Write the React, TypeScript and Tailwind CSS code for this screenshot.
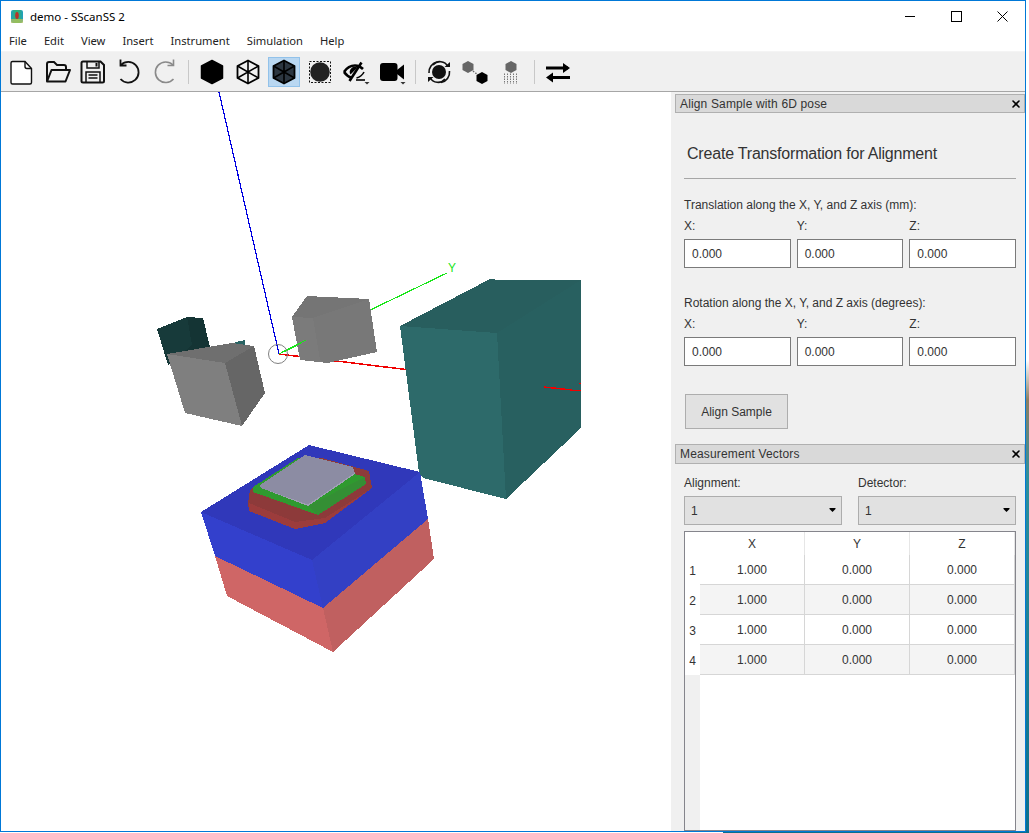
import React from "react";
import { X } from "lucide-react";

const menus = ["File", "Edit", "View", "Insert", "Instrument", "Simulation", "Help"];
const rows = [1, 2, 3, 4];
const hex = "15,3.5 25.5,9 25.5,21 15,26.5 4.5,21 4.5,9";

const Icon: React.FC<{ children: React.ReactNode; active?: boolean }> = ({ children, active }) => (
  <div className="w-9 h-[30px] flex items-center justify-center shrink-0">
    <div
      className={`w-8 h-[30px] flex items-center justify-center border ${
        active ? "bg-[#b9d7f1] border-[#92c2ea]" : "border-transparent"
      }`}
    >
      <svg width="30" height="30" viewBox="0 0 30 30" fill="none">
        {children}
      </svg>
    </div>
  </div>
);

const Sep = () => <div className="w-px h-6 bg-[#c8c8c8] mx-[5px] shrink-0" />;

const Spokes = ({ color = "#000" }: { color?: string }) => (
  <path d="M15 3.5V26.5M4.5 9 25.5 21M25.5 9 4.5 21" stroke={color} strokeWidth="1.6" />
);

const WinButton: React.FC<{ children: React.ReactNode }> = ({ children }) => (
  <div className="w-[46px] flex justify-center">
    <svg width="11" height="11" viewBox="0 0 11 11" fill="none" stroke="#000" strokeWidth="1">
      {children}
    </svg>
  </div>
);

const DockTitle: React.FC<{ title: string; className: string }> = ({ title, className }) => (
  <div className={`flex items-center justify-between bg-[#d9d9d9] border border-[#b0b0b0] pl-1 pr-[2px] text-[12px] text-[#333] tracking-[0.15px] ${className}`}>
    <span>{title}</span>
    <X size={12} strokeWidth={3.2} className="text-black" />
  </div>
);

const Input = () => (
  <div className="h-[29px] bg-white border border-[#7a7a7a] flex items-center pl-[7px] text-[12px] text-[#333]">0.000</div>
);

const Vectors = () => (
  <div className="grid grid-cols-3 gap-[6px] mt-[6px]">
    <Input />
    <Input />
    <Input />
  </div>
);

const AxisLabels = () => (
  <div className="grid grid-cols-3 gap-[6px] mt-[7px] h-[14px] leading-[14px] text-[12px] text-[#333]">
    <span>X:</span>
    <span>Y:</span>
    <span>Z:</span>
  </div>
);

const Select = () => (
  <div className="h-[29px] bg-[#e1e1e1] border border-[#adadad] flex items-center justify-between pl-[6px] pr-[4px] text-[12px] text-[#333]">
    <span>1</span>
    <svg width="9" height="5" viewBox="0 0 9 5">
      <path d="M1.5 0h6v1l-3 3-3-3z" fill="#000" />
    </svg>
  </div>
);

// viewport drawn in page coordinates
const Scene = () => (
  <svg className="w-full h-full" viewBox="1 92 670 739" shapeRendering="crispEdges">
    <polygon points="157,329 187,317 203,318 210,347 168,365" fill="#143434" />
    <polygon points="157,329 187,317 192,345 168,365" fill="#173a3a" />
    <polygon points="235,342 245,340 245,346 238,346" fill="#2a6464" />

    <line x1="219" y1="92" x2="279" y2="354" stroke="#0000e0" strokeWidth="1.2" />
    <line x1="279" y1="354" x2="447" y2="273" stroke="#19e619" strokeWidth="1.2" />
    <line x1="279" y1="354" x2="406" y2="369.5" stroke="#f00000" strokeWidth="1.5" />

    <polygon points="292,317 307,296 369,299 313,318" fill="#757575" />
    <polygon points="292,317 313,318 320,360 327,363 300,360" fill="#7b7b7b" />
    <polygon points="313,318 369,299 377,352 332,362 327,363 320,360" fill="#787878" />
    <line x1="279" y1="354" x2="306" y2="340" stroke="#19e619" strokeWidth="1.2" />

    <polygon points="167,354 232,343 254,346 225,363" fill="#6f6f6f" />
    <polygon points="167,354 225,363 242,426 185,413" fill="#7f7f7f" />
    <polygon points="225,363 254,346 265,393 242,426" fill="#666666" />

    <circle cx="278" cy="354" r="9.5" fill="none" stroke="#808080" strokeWidth="1" shapeRendering="auto" />

    <polygon points="400,326 490,279 500,280 581,280 497,333" fill="#285e5e" />
    <polygon points="400,326 497,333 506,499 423,478 419,473" fill="#2d6a6a" />
    <polygon points="497,333 581,280 581,428 506,499" fill="#286060" />
    <line x1="544" y1="387" x2="572" y2="390" stroke="#f00000" strokeWidth="1.5" />
    <line x1="572" y1="390" x2="581" y2="390" stroke="#f00000" strokeWidth="1" />
    <line x1="579" y1="383" x2="581" y2="383" stroke="#f00000" strokeWidth="1" />

    <polygon points="215,556 323,608 333,652 227,596" fill="#cf6666" />
    <polygon points="323,608 428,519 434,559 333,652" fill="#c06060" />
    <polygon points="201,512 309,445 420,472 312,560" fill="#3038ba" />
    <polygon points="201,512 312,560 323,608 215,556" fill="#3340cc" />
    <polygon points="312,560 420,472 428,519 323,608" fill="#3340c4" />

    <polygon points="250,490 298,458 322,458 369,471 372,488 325,523 295,529 249,511 248,503" fill="#8d3a3a" />
    <polygon points="249,503 295,522 325,518 372,488 325,523 295,529 249,511" fill="#9c3c3c" />
    <polygon points="253,487 298,458 365,477 366,484 318,515 253,492" fill="#2f9a2f" />
    <polygon points="318,515 366,484 365,477 308,506" fill="#348f34" />
    <polygon points="260,485 305,455 353,467 355,474 308,506 261,488" fill="#8c8ca3" />
    <polygon points="261,488 308,504.5 355,472.5 355,474 308,506" fill="#a0a0b5" />

    <text x="448" y="272" fill="#19e619" fontSize="12" fontFamily="Liberation Sans, sans-serif" shapeRendering="auto">
      Y
    </text>
  </svg>
);

export default function App() {
  return (
    <div className="w-[1029px] h-[833px] flex overflow-hidden font-['Liberation_Sans',sans-serif] bg-[linear-gradient(90deg,#ffffff_0,#ffffff_723px,#0c6f8c_723px)]">
      <div className="w-[1026px] h-[832px] border border-[#0078d7] flex flex-col bg-white shrink-0">
        {/* title bar */}
        <div className="h-[31px] flex items-center shrink-0">
          <svg className="ml-[10px]" width="12" height="13" viewBox="0 0 12 13">
            <defs>
              <linearGradient id="logo" x1="0" x2="1" y1="0" y2="0">
                <stop offset="0" stopColor="#1f9fc0" />
                <stop offset="0.35" stopColor="#2fae7a" />
                <stop offset="0.65" stopColor="#2fae7a" />
                <stop offset="1" stopColor="#1f9fc0" />
              </linearGradient>
            </defs>
            <rect width="12" height="13" rx="2" fill="url(#logo)" />
            <rect x="0" y="9" width="12" height="4" fill="#d8c84a" opacity="0.6" />
            <ellipse cx="6" cy="5.5" rx="1.8" ry="3.5" fill="#b8322a" />
          </svg>
          <span className="ml-[7px] text-[11.5px] text-black font-['Noto_Sans',sans-serif]">demo - SScanSS 2</span>
          <div className="ml-auto flex">
            <WinButton>
              <path d="M0 5.5H10" shapeRendering="crispEdges" />
            </WinButton>
            <WinButton>
              <rect x="0.5" y="0.5" width="10" height="10" shapeRendering="crispEdges" />
            </WinButton>
            <WinButton>
              <path d="M0.5 0.5 10.5 10.5M10.5 0.5 0.5 10.5" />
            </WinButton>
          </div>
        </div>

        {/* menu bar */}
        <div className="h-5 flex items-center gap-[17px] pl-2 text-[11.2px] text-[#222] font-['Noto_Sans',sans-serif] border-b border-[#f4f4f4] shrink-0">
          {menus.map((m) => (
            <span key={m}>{m}</span>
          ))}
        </div>

        {/* toolbar */}
        <div className="h-10 flex items-center pl-[2px] bg-[#f0f0f0] border-b border-[#a6a6a6] shrink-0">
          <Icon>
            <path d="M6.5 4.5H19L25.5 11.5V25.5A1.5 1.5 0 0 1 24 27H6.5A1.5 1.5 0 0 1 5 25.5V6A1.5 1.5 0 0 1 6.5 4.5Z" fill="#fff" stroke="#111" strokeWidth="1.4" />
            <path d="M19 4.5V9.5A2 2 0 0 0 21 11.5H25.5" stroke="#111" strokeWidth="1.4" />
          </Icon>
          <Icon>
            <path d="M5 24V7A2 2 0 0 1 7 5H12L15 8H22A2 2 0 0 1 24 10V13" stroke="#111" strokeWidth="2" />
            <path d="M5 24.5 9.5 13H28L23.5 24.5Z" stroke="#111" strokeWidth="2" strokeLinejoin="round" />
          </Icon>
          <Icon>
            <path d="M5 4.5H22.5L26 8V24A1.5 1.5 0 0 1 24.5 25.5H5A1.5 1.5 0 0 1 3.5 24V6A1.5 1.5 0 0 1 5 4.5Z" stroke="#111" strokeWidth="2" />
            <path d="M9 5V11H21V5" stroke="#111" strokeWidth="1.5" />
            <rect x="17.5" y="6" width="2" height="3.5" fill="#111" />
            <path d="M8 25V15H22V25" stroke="#111" strokeWidth="1.5" />
            <path d="M10.5 18H19.5M10.5 21H19.5" stroke="#111" strokeWidth="1.3" />
          </Icon>
          <Icon>
            <path d="M7 8A10.3 10.3 0 1 1 6.5 22" stroke="#111" strokeWidth="1.8" />
            <path d="M6.5 2.5V8.5H12.5" stroke="#111" strokeWidth="1.8" />
          </Icon>
          <Icon>
            <path d="M23 8A10.3 10.3 0 1 0 23.5 22" stroke="#8a8a8a" strokeWidth="1.6" />
            <path d="M23.5 2.5V8.5H17.5" stroke="#8a8a8a" strokeWidth="1.6" />
          </Icon>
          <Sep />
          <Icon>
            <polygon points={hex} fill="#000" stroke="#000" strokeWidth="1.5" strokeLinejoin="round" />
          </Icon>
          <Icon>
            <polygon points={hex} stroke="#000" strokeWidth="1.8" strokeLinejoin="round" />
            <Spokes />
          </Icon>
          <Icon active>
            <polygon points={hex} fill="#2c3640" stroke="#000" strokeWidth="1.8" strokeLinejoin="round" />
            <Spokes />
          </Icon>
          <Icon>
            <rect x="4.5" y="4.5" width="21" height="21" stroke="#111" strokeWidth="1" strokeDasharray="2 1.5" />
            <circle cx="15" cy="15" r="9.8" fill="#222" />
          </Icon>
          <Icon>
            <path d="M3 15C6 10.5 10 8.5 14 8.5C17 8.5 19.5 9.5 22 12" stroke="#000" strokeWidth="2.6" />
            <path d="M3 15C5.5 18.5 8 20 11 21" stroke="#000" strokeWidth="2.6" />
            <path d="M15 10A5 5 0 0 0 9.5 17.5L16.5 10.5Z" fill="#000" />
            <path d="M8.5 24 20.5 5.5" stroke="#000" strokeWidth="2.6" />
            <path d="M23 15C21.5 18 19 20 15.5 21" stroke="#000" strokeWidth="1.6" />
            <path d="M15 23H24" stroke="#000" strokeWidth="1.6" />
            <path d="M23.5 25H28.5L26 27.5Z" fill="#333" />
          </Icon>
          <Icon>
            <rect x="3" y="6" width="17.5" height="18" rx="3" fill="#000" />
            <path d="M20 13 27 7.5V22.5L20 17Z" fill="#000" />
            <path d="M23.5 25H28.5L26 27.5Z" fill="#333" />
          </Icon>
          <Sep />
          <Icon>
            <circle cx="15" cy="15" r="7" fill="#111" />
            <path d="M5 16A10.5 10.5 0 0 1 13 5M25.5 14A10.5 10.5 0 0 1 17 25.5" stroke="#111" strokeWidth="1.6" />
            <path d="M9 8A9 9 0 0 1 24 9.5M21 22A9 9 0 0 1 6 20.5" stroke="#111" strokeWidth="1.6" />
            <path d="M20.5 10H26V5ZM9.5 20H4V25Z" fill="#111" />
          </Icon>
          <Icon>
            <polygon points="8,4 13.5,7 13.5,13 8,16 2.5,13 2.5,7" fill="#666" />
            <path d="M13 14 18 18" stroke="#666" strokeWidth="1.4" strokeDasharray="1.5 1.5" />
            <polygon points="22,15 27.5,18 27.5,24 22,27 16.5,24 16.5,18" fill="#000" />
          </Icon>
          <Icon>
            <polygon points="15,4 20.5,7 20.5,13 15,16 9.5,13 9.5,7" fill="#666" />
            <path d="M8.5 16.5V27M11.5 16.5V27M14.5 16.5V27M17.5 16.5V27M20.5 16.5V27" stroke="#777" strokeWidth="1" strokeDasharray="1.5 1" />
          </Icon>
          <Sep />
          <Icon>
            <path d="M3 11H25M5 20.5H27" stroke="#000" strokeWidth="2.8" />
            <path d="M20 6 27 11 20 16ZM10 15.5 3 20.5 10 25.5Z" fill="#000" />
          </Icon>
        </div>

        {/* main */}
        <div className="flex-1 flex min-h-0">
          <div className="w-[670px] shrink-0 bg-white">
            <Scene />
          </div>

          <div className="flex-1 flex flex-col min-h-0 bg-[#f0f0f0] pl-1 pt-[2px]">
            <DockTitle title="Align Sample with 6D pose" className="h-[19px]" />
            <div className="pl-[9px] pr-[9px]">
              <div className="mt-[31px] pl-[3px] h-5 leading-5 text-[16px] text-[#333] tracking-[-0.2px]">Create Transformation for Alignment</div>
              <div className="mt-[14px] h-px bg-[#a6a6a6]" />
              <div className="mt-[19px] h-[14px] leading-[14px] text-[12px] text-[#333]">Translation along the X, Y, and Z axis (mm):</div>
              <AxisLabels />
              <Vectors />
              <div className="mt-7 h-[14px] leading-[14px] text-[12px] text-[#333]">Rotation along the X, Y, and Z axis (degrees):</div>
              <AxisLabels />
              <Vectors />
              <div className="mt-7 ml-px w-[103px] h-[35px] bg-[#e1e1e1] border border-[#adadad] flex items-center justify-center text-[12px] text-[#333]">Align Sample</div>
            </div>
            <DockTitle title="Measurement Vectors" className="mt-[15px] h-5" />
            <div className="flex-1 flex flex-col min-h-0 pl-[9px] pr-[9px]">
              <div className="grid grid-cols-2 gap-4 mt-3 h-[14px] leading-[14px] text-[12px] text-[#333]">
                <span>Alignment:</span>
                <span>Detector:</span>
              </div>
              <div className="grid grid-cols-2 gap-4 mt-[6px]">
                <Select />
                <Select />
              </div>
              <div className="mt-[6px] flex-1 flex min-h-0 border border-[#85858c] bg-white text-[12px] text-[#333]">
                <div className="w-[15px] flex flex-col bg-white shrink-0">
                  <div className="h-[23px] bg-white" />
                  {rows.map((r) => (
                    <div key={r} className="h-[30px] flex items-center justify-center pt-px">{r}</div>
                  ))}
                  <div className="flex-1 bg-[#f0f0f0]" />
                </div>
                <div className="flex-1">
                  <div className="h-[23px] flex">
                    {["X", "Y", "Z"].map((h) => (
                      <div key={h} className="w-[105px] border-r border-[#e6e6e6] flex items-center justify-center">{h}</div>
                    ))}
                  </div>
                  {rows.map((r) => (
                    <div key={r} className={`h-[30px] flex border-b border-[#d6d6d6] ${r % 2 === 0 ? "bg-[#f4f4f4]" : "bg-white"}`}>
                      <div className="w-[105px] border-r border-[#d6d6d6] flex items-center justify-center">1.000</div>
                      <div className="w-[105px] border-r border-[#d6d6d6] flex items-center justify-center">0.000</div>
                      <div className="w-[105px] border-r border-[#d6d6d6] flex items-center justify-center">0.000</div>
                    </div>
                  ))}
                </div>
              </div>
            </div>
          </div>
        </div>
      </div>
      {/* desktop wallpaper showing past the window edge */}
      <div className="w-[3px] h-full bg-[linear-gradient(180deg,#ffffff_0,#ffffff_360px,#8d7f62_400px,#2c8f9c_480px,#0c6f8c_100%)]" />
    </div>
  );
}
